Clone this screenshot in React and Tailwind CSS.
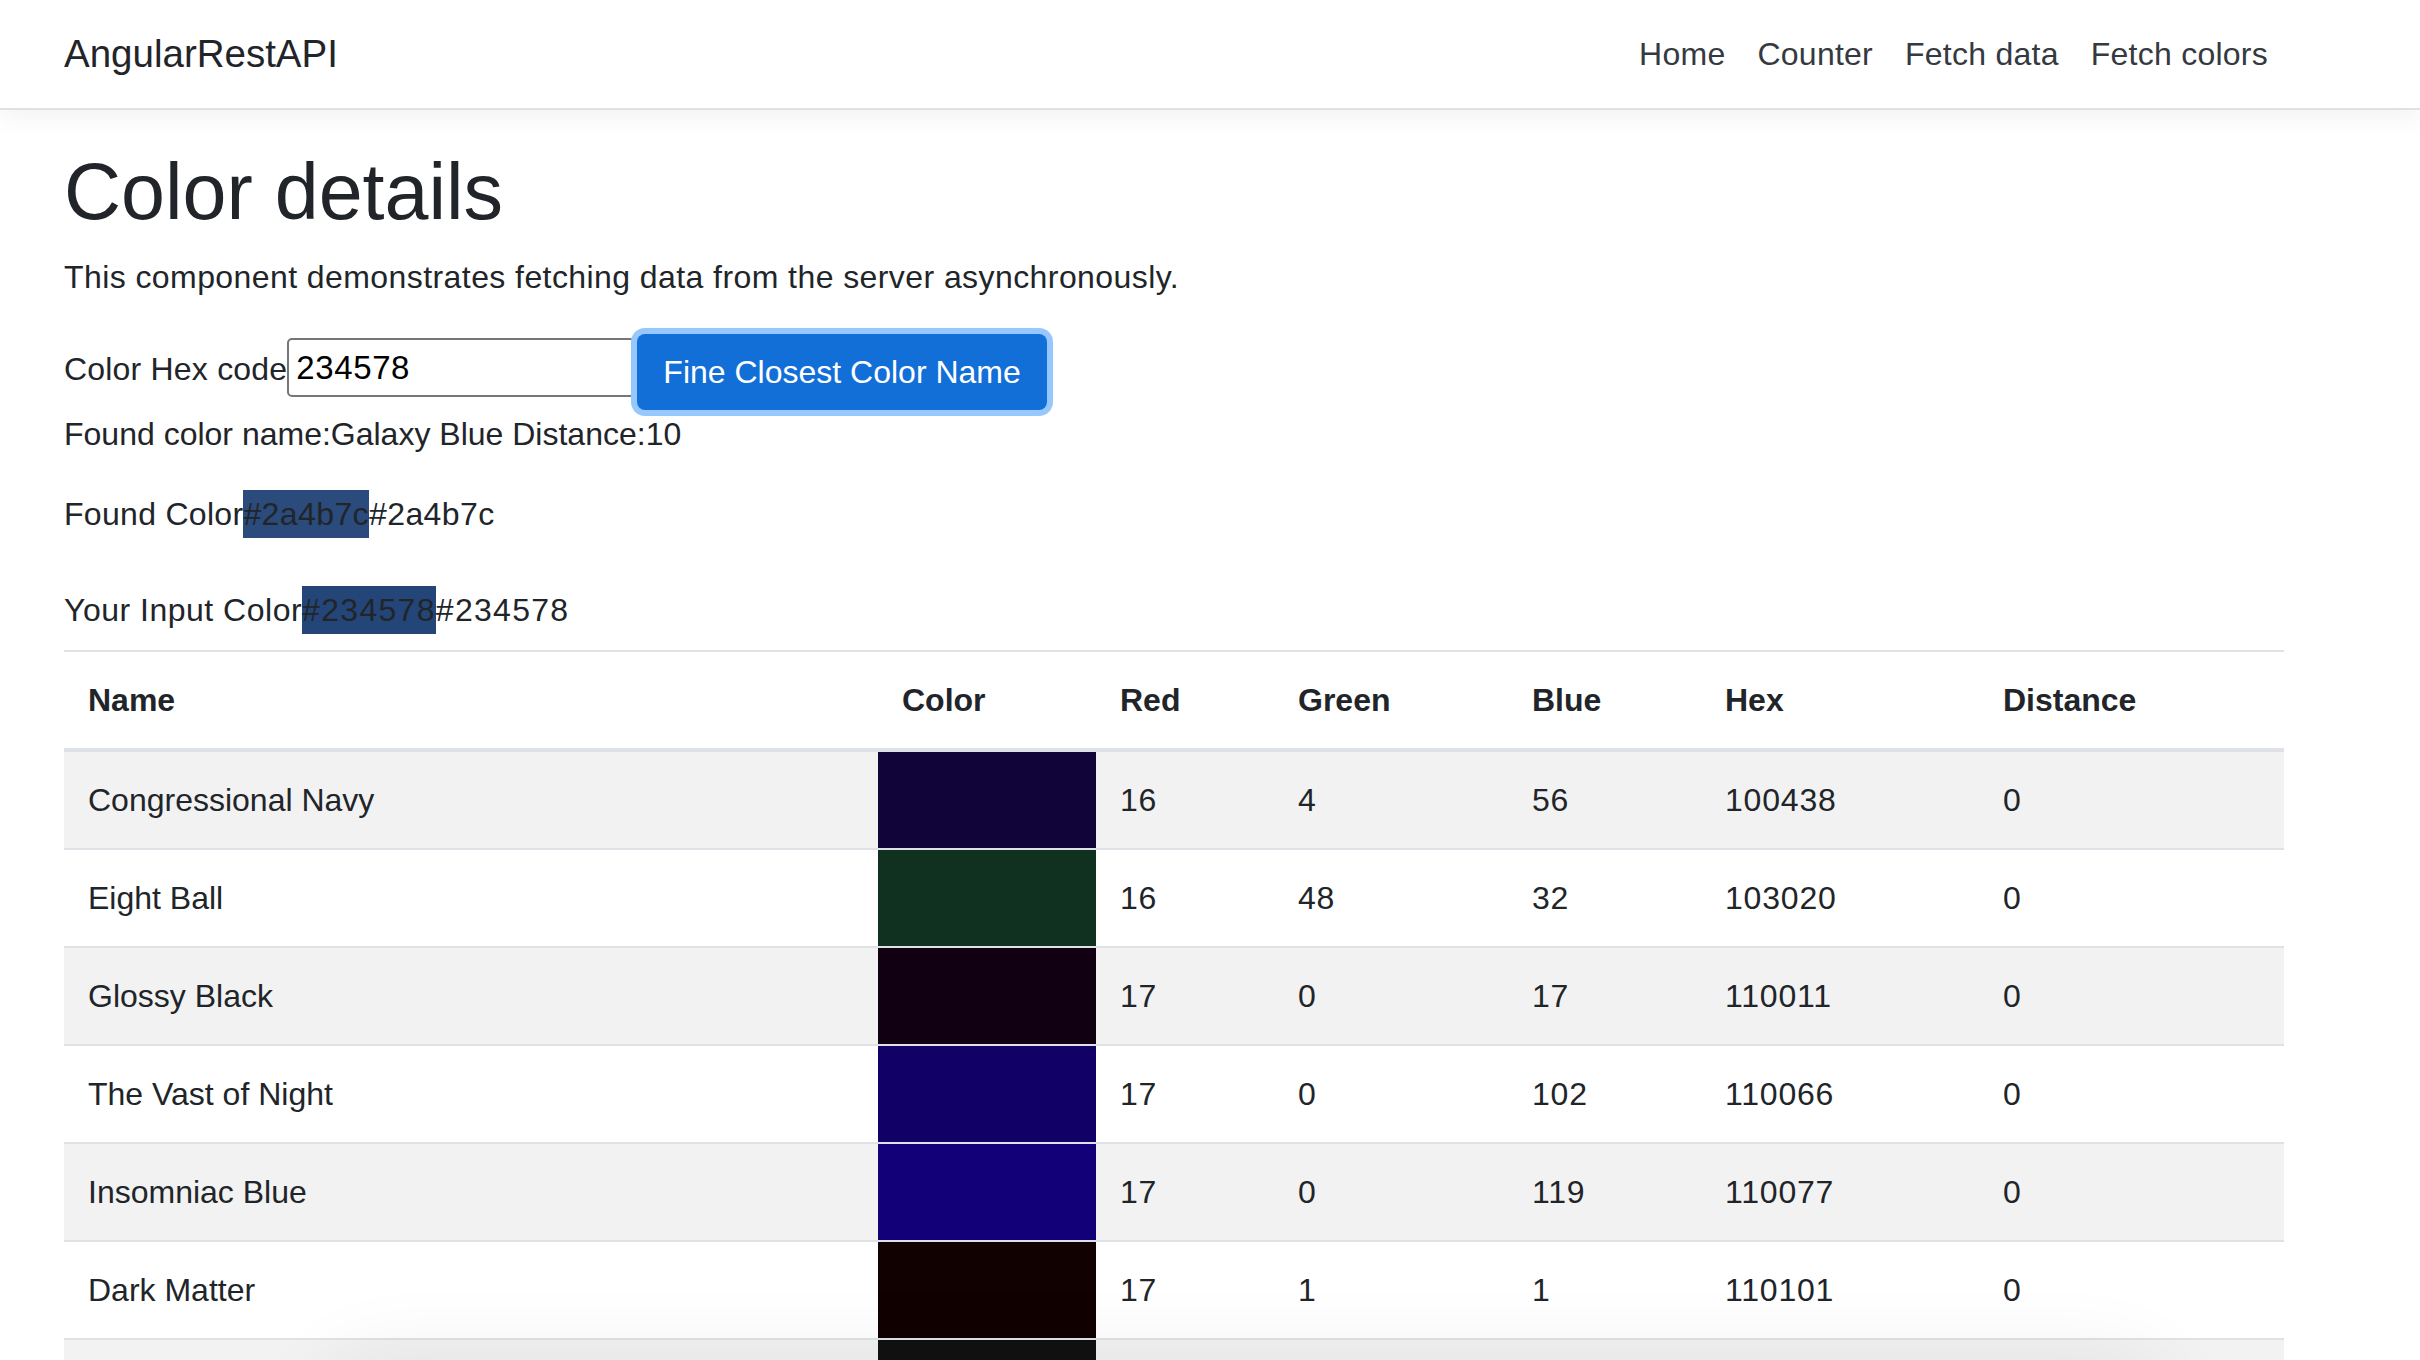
import React from 'react';

const NAV_LINKS = ['Home', 'Counter', 'Fetch data', 'Fetch colors'];

const COLORS = [
  { name: 'Congressional Navy', hex: '100438', r: 16, g: 4, b: 56, distance: 0 },
  { name: 'Eight Ball', hex: '103020', r: 16, g: 48, b: 32, distance: 0 },
  { name: 'Glossy Black', hex: '110011', r: 17, g: 0, b: 17, distance: 0 },
  { name: 'The Vast of Night', hex: '110066', r: 17, g: 0, b: 102, distance: 0 },
  { name: 'Insomniac Blue', hex: '110077', r: 17, g: 0, b: 119, distance: 0 },
  { name: 'Dark Matter', hex: '110101', r: 17, g: 1, b: 1, distance: 0 },
  { name: 'Dark Tone Ink', hex: '111111', r: 17, g: 17, b: 17, distance: 0 },
];

// column widths measured off the page, they add up to the container width
const COLUMNS = [
  { label: 'Name', width: 'w-[814px]' },
  { label: 'Color', width: 'w-[218px]' },
  { label: 'Red', width: 'w-[178px]' },
  { label: 'Green', width: 'w-[234px]' },
  { label: 'Blue', width: 'w-[193px]' },
  { label: 'Hex', width: 'w-[278px]' },
  { label: 'Distance', width: 'w-[305px]' },
];

function NavBar() {
  return (
    <header className="h-[110px] border-b-2 border-[#dee2e6] bg-white shadow-[0_8px_24px_rgba(0,0,0,0.05)]">
      <div className="ml-[64px] flex h-full w-[2220px] items-center justify-between">
        <span className="text-[38.5px] leading-[60px] text-[#212529]">AngularRestAPI</span>
        <ul className="flex">
          {NAV_LINKS.map(link => (
            <li key={link} className="px-4 text-[32px] leading-[48px] tracking-[0.25px] text-[#343a40]">
              {link}
            </li>
          ))}
        </ul>
      </div>
    </header>
  );
}

// hex swatch + the plain hex text after it
function HexPreview({ label, hex, labelTracking, hexTracking }) {
  return (
    <div>
      <span className={labelTracking}>{label}</span>
      <span className={`inline-block leading-[48px] ${hexTracking}`} style={{ backgroundColor: `#${hex}` }}>
        #{hex}
      </span>
      <span className={hexTracking}>#{hex}</span>
    </div>
  );
}

function ColorTable() {
  const cell = 'border-b-2 border-[#dee2e6] px-6 leading-[48px]';
  const num = `${cell} tracking-[0.8px]`;
  return (
    <table className="mt-[16px] w-[2220px] table-fixed border-separate border-spacing-0 text-left">
      <thead>
        <tr>
          {COLUMNS.map(col => (
            <th
              key={col.label}
              className={`${col.width} border-t-2 border-b-4 border-[#dee2e6] px-6 pt-6 pb-6 font-bold leading-[48px]`}
            >
              {col.label}
            </th>
          ))}
        </tr>
      </thead>
      <tbody>
        {COLORS.map((c, idx) => (
          <tr key={c.hex} className={idx % 2 === 0 ? 'bg-[#f2f2f2]' : 'bg-white'}>
            <td className={`${cell} h-[98px]`}>{c.name}</td>
            <td className={cell} style={{ backgroundColor: `#${c.hex}` }} />
            <td className={num}>{c.r}</td>
            <td className={num}>{c.g}</td>
            <td className={num}>{c.b}</td>
            <td className={num}>{c.hex}</td>
            <td className={num}>{c.distance}</td>
          </tr>
        ))}
      </tbody>
    </table>
  );
}

export default function App() {
  return (
    <div className="min-h-screen bg-white font-['Liberation_Sans',Arial,sans-serif] text-[32px] leading-[48px] text-[#212529]">
      <NavBar />
      <main className="ml-[64px] w-[2220px] pt-[34px]">
        <h1 className="mb-[13px] text-[79px] font-medium leading-[96px]">Color details</h1>
        <p className="tracking-[0.42px]">This component demonstrates fetching data from the server asynchronously.</p>

        <div className="mt-[33px] flex h-[76px] items-start">
          <label className="mt-[11px] tracking-[0.2px]">Color Hex code</label>
          <input
            defaultValue="234578"
            className="mt-[4px] h-[59px] w-[348px] rounded-[5px] border-2 border-[#767676] px-[7px] text-[33px] tracking-[0.6px] text-black outline-none"
          />
          <button className="ml-[2px] h-[76px] rounded-[8px] bg-[#136fd8] px-[26px] text-[32px] text-white shadow-[0_0_0_6px_#96c8fd]">
            Fine Closest Color Name
          </button>
        </div>

        <div>Found color name:Galaxy Blue Distance:10</div>
        <div className="mt-[32px]">
          <HexPreview label="Found Color" hex="2a4b7c" labelTracking="tracking-[0.3px]" hexTracking="tracking-[0.4px]" />
        </div>
        <div className="mt-[48px]">
          <HexPreview label="Your Input Color" hex="234578" labelTracking="tracking-[0.5px]" hexTracking="tracking-[1.3px]" />
        </div>

        <ColorTable />
      </main>
      {/* shadow of something sitting just below the fold */}
      <div className="pointer-events-none fixed top-[1370px] right-[260px] left-[330px] h-[200px] rounded-[60px] bg-white shadow-[0_0_80px_20px_rgba(0,0,0,0.06)]" />
    </div>
  );
}
